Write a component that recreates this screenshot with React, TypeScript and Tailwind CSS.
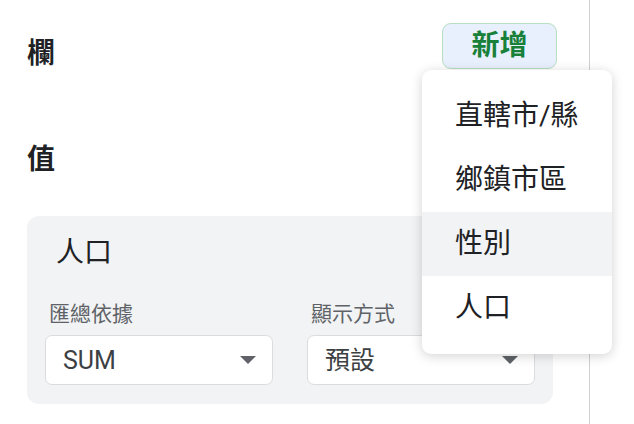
import React from "react";

const font = { fontFamily: 'Roboto, "Noto Sans CJK TC", sans-serif' };

function Caret() {
      return (
            <svg width="16" height="8" viewBox="0 0 16 8" className="shrink-0">
                  <path d="M0 0 L16 0 L8 8 Z" fill="#5f6368" />
            </svg>
      );
}

function Select({ value }: { value: string }) {
      return (
            <div className="flex-1 h-[50px] bg-white border border-[#dadce0] rounded-[7px] flex items-center justify-between pl-[17px] pr-[16px]">
                  <span className="text-[25px] text-[#3c4043] leading-none">{value}</span>
                  <Caret />
            </div>
      );
}

export default function App() {
      const items = ["直轄市/縣", "鄉鎮市區", "性別", "人口"];

      return (
            <div className="relative w-[634px] h-[424px] bg-white flex overflow-hidden" style={font}>
                  <div className="w-[590px] h-full border-r border-[#d0d0d0] pl-[27px] pr-[36px]">
                        <div className="mt-[23px] h-[46px] flex items-start justify-between">
                              <span className="mt-[8px] text-[28px] leading-[46px] font-bold text-[#202124]">欄</span>
                              <button className="mr-[-4px] w-[115px] h-[46px] rounded-[9px] bg-[#e8f0fe] border border-[#b7dfc2] text-[#188038] text-[28px] font-bold leading-none">
                                    新增
                              </button>
                        </div>

                        <div className="mt-[71px] text-[28px] leading-[40px] font-bold text-[#202124]">值</div>

                        <div className="mt-[36px] bg-[#f1f3f4] rounded-[12px] px-[18px] pt-[19px] pb-[19px]">
                              <div className="ml-[11px] text-[28px] leading-[36px] text-[#202124]">人口</div>
                              <div className="mt-[29px] flex gap-[34px]">
                                    <div className="flex-1 flex flex-col">
                                          <span className="pl-[4px] text-[21px] leading-[28px] text-[#5f6368]">匯總依據</span>
                                          <div className="mt-[7px] flex">
                                                <Select value="SUM" />
                                          </div>
                                    </div>
                                    <div className="flex-1 flex flex-col">
                                          <span className="pl-[4px] text-[21px] leading-[28px] text-[#5f6368]">顯示方式</span>
                                          <div className="mt-[7px] flex">
                                                <Select value="預設" />
                                          </div>
                                    </div>
                              </div>
                        </div>
                  </div>

                  <div className="absolute left-[422px] top-[70px] w-[190px] bg-white rounded-[9px] shadow-[0_2px_12px_rgba(0,0,0,0.18)] py-[14px]">
                        {items.map((item) => (
                              <div
                                    key={item}
                                    className={
                                          "h-[64px] flex items-center pl-[33px] text-[28px] text-[#202124] " +
                                          (item === "性別" ? "bg-[#f1f3f4]" : "")
                                    }
                              >
                                    {item}
                              </div>
                        ))}
                  </div>
            </div>
      );
}
